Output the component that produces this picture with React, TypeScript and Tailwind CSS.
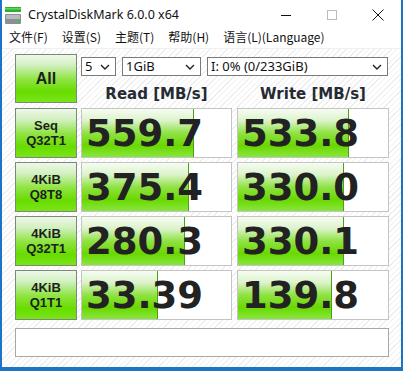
import { ReactNode } from "react";

const rows = [
  { l1: "Seq", l2: "Q32T1", read: "559.7", rw: 112, write: "533.8", ww: 111 },
  { l1: "4KiB", l2: "Q8T8", read: "375.4", rw: 107, write: "330.0", ww: 106 },
  { l1: "4KiB", l2: "Q32T1", read: "280.3", rw: 103, write: "330.1", ww: 106 },
  { l1: "4KiB", l2: "Q1T1", read: "33.39", rw: 76, write: "139.8", ww: 94 },
];

const Chevron = () => (
  <svg width="10" height="6" viewBox="0 0 10 6" className="shrink-0">
    <polyline points="1,1 5,5 9,1" fill="none" stroke="#222" strokeWidth="1.4" />
  </svg>
);

const Select = ({ w, children }: { w: string; children: ReactNode }) => (
  <div
    className={`${w} h-[19px] flex items-center justify-between border border-[#7a7a7a] bg-white pl-[3px] pr-[5px] text-[13px] leading-none text-[#111]`}
  >
    <span>{children}</span>
    <Chevron />
  </div>
);

const LabelButton = ({ children, tall }: { children: ReactNode; tall?: boolean }) => (
  <div
    className={`w-[62px] ${tall ? "h-[49px]" : "h-[50px]"} shrink-0 flex flex-col items-center justify-center border border-[#7a897a] bg-[image:linear-gradient(to_bottom,#eef8ea_0%,#d2f0c0_22%,#8ee440_52%,#68dc00_78%,#7ae418_100%)] font-['Liberation_Sans',sans-serif] font-bold text-[#1e1e1e]`}
  >
    {children}
  </div>
);

const ValueBox = ({ value, fill, w }: { value: string; fill: number; w: string }) => (
  <div className={`${w} h-[50px] relative border border-[#c4c4c4] bg-white overflow-hidden`}>
    <div
      className="absolute left-0 top-0 bottom-0 border-r border-[#4f9e18] bg-[image:linear-gradient(to_bottom,#f6fcf2_0%,#dcf3cc_24%,#90e244_50%,#6ad800_76%,#88e63e_100%)]"
      style={{ width: fill }}
    />
    <div className="relative h-full flex items-center pl-[4px] font-['DejaVu_Sans',sans-serif] font-bold text-[37px] leading-none text-[#222]">
      {value}
    </div>
  </div>
);

export default function App() {
  return (
    <div className="w-[403px] h-[371px] flex flex-col border-x-2 border-b-4 border-[#1b74c6] bg-white font-['Noto_Sans','Noto_Sans_CJK_SC',sans-serif] overflow-hidden">
      {/* title bar */}
      <div className="h-[30px] shrink-0 flex items-center">
        <svg width="16" height="17" viewBox="0 0 16 17" className="ml-[3px]">
          <rect x="0" y="0" width="16" height="5" fill="#2fae2f" />
          <rect x="0" y="1" width="16" height="1.5" fill="#5fd35f" />
          <rect x="0" y="7" width="16" height="10" rx="1" fill="#8a8f94" />
          <rect x="1" y="8" width="14" height="4" fill="#b8bcc0" />
          <circle cx="12.5" cy="14" r="1.3" fill="#3ccc3c" />
        </svg>
        <span className="ml-[7px] text-[12.5px] text-[#111]">CrystalDiskMark 6.0.0 x64</span>
        <div className="ml-auto flex h-full">
          <div className="w-[46px] flex items-center justify-center">
            <div className="w-[10px] h-px bg-[#111]" />
          </div>
          <div className="w-[46px] flex items-center justify-center">
            <div className="w-[10px] h-[10px] border border-[#bcbcbc]" />
          </div>
          <div className="w-[46px] flex items-center justify-center">
            <svg width="12" height="12" viewBox="0 0 12 12">
              <path d="M0.5 0.5 L11.5 11.5 M11.5 0.5 L0.5 11.5" stroke="#111" strokeWidth="1" />
            </svg>
          </div>
        </div>
      </div>

      {/* menu bar */}
      <div className="h-[19px] shrink-0 flex items-start text-[12px] leading-[14px] text-[#111] font-['Noto_Sans_CJK_SC',sans-serif] border-b border-[#f0f0f0]">
        <span className="px-[7px]">文件(F)</span>
        <span className="px-[7px]">设置(S)</span>
        <span className="px-[7px]">主题(T)</span>
        <span className="px-[7px]">帮助(H)</span>
        <span className="px-[7px]">语言(L)(Language)</span>
      </div>

      {/* content */}
      <div className="flex-1 pl-[13px] pr-[10px] pt-[5px] bg-[image:repeating-linear-gradient(135deg,#ffffff_0px,#ffffff_3px,#eeeeee_3px,#eeeeee_4px)]">
        <div className="flex">
          <LabelButton tall>
            <span className="text-[16px] leading-none">All</span>
          </LabelButton>
          <div className="ml-[4px] flex flex-col">
            <div className="mt-[3px] flex gap-[6px]">
              <Select w="w-[35px]">5</Select>
              <Select w="w-[79px]">1GiB</Select>
              <Select w="w-[181px]">I: 0% (0/233GiB)</Select>
            </div>
            <div className="mt-[9px] flex gap-[5px] font-['DejaVu_Sans',sans-serif] font-bold text-[15px] leading-[18px] text-[#262a33]">
              <div className="w-[151px] text-center">Read [MB/s]</div>
              <div className="w-[152px] text-center">Write [MB/s]</div>
            </div>
          </div>
        </div>

        <div className="mt-[5px] flex flex-col gap-[4px]">
          {rows.map((r, i) => (
            <div key={i} className="flex">
              <LabelButton>
                <span className="text-[13px] leading-[15px]">{r.l1}</span>
                <span className="text-[13px] leading-[15px]">{r.l2}</span>
              </LabelButton>
              <div className="ml-[4px]">
                <ValueBox value={r.read} fill={r.rw} w="w-[151px]" />
              </div>
              <div className="ml-[5px]">
                <ValueBox value={r.write} fill={r.ww} w="w-[152px]" />
              </div>
            </div>
          ))}
        </div>

        <div className="mt-[8px] h-[29px] w-[374px] border border-[#a8a8a8] bg-white" />
      </div>
    </div>
  );
}
